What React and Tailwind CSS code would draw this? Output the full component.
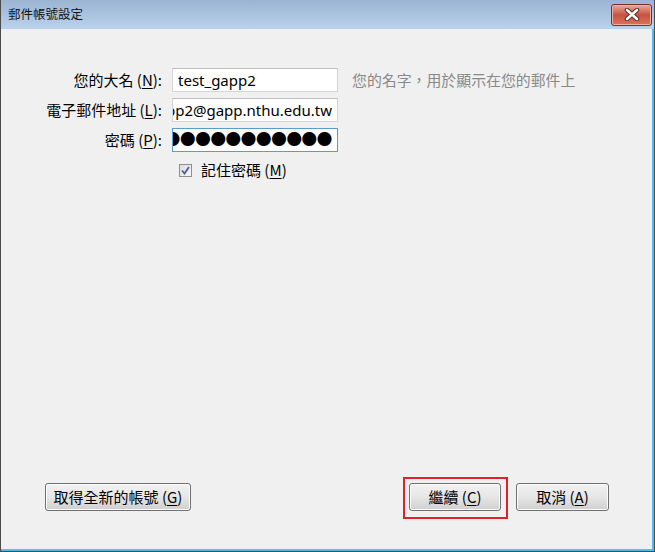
import { useState } from 'react'

const cjk = '"Noto Sans CJK TC", "Noto Sans", sans-serif'
const latin = '"Noto Sans", "Noto Sans CJK TC", sans-serif'

function Key({ k }) {
  return <span className="underline underline-offset-2">{k}</span>
}

function WinButton({ children, className = '' }) {
  return (
    <button
      className={
        'h-[28px] rounded-[3px] border border-[#707070] bg-gradient-to-b from-[#f2f2f2] via-[#e6e6e6] to-[#cfcfcf] text-[15px] text-black shadow-[inset_0_0_0_1px_#fcfcfc] ' +
        className
      }
      style={{ fontFamily: cjk }}
    >
      {children}
    </button>
  )
}

function Field({ children, focused, scrolled }) {
  return (
    <div
      className={
        'flex h-[24px] w-[166px] items-center overflow-hidden whitespace-nowrap bg-white px-[5px] text-[15px] text-black border ' +
        (scrolled ? 'justify-end ' : 'justify-start ') +
        (focused ? 'border-[#5a9bd0]' : 'border-[#d5d5d5] border-t-[#bfbfbf]')
      }
      style={{ fontFamily: latin }}
    >
      {children}
    </div>
  )
}

function App() {
  const [remember, setRemember] = useState(true)

  return (
    <div className="flex h-[552px] w-[655px] flex-col border-l border-r border-b border-[#4a4a4a] bg-[#f0f0f0]">
      <div className="flex h-[29px] shrink-0 items-center justify-between bg-gradient-to-b from-[#9bb4d3] to-[#bad2eb] pl-[7px] pr-[2px]">
        <span className="text-[12.5px] text-[#111]" style={{ fontFamily: cjk }}>
          郵件帳號設定
        </span>
        <div className="flex h-[22px] w-[41px] items-center justify-center rounded-[3px] border border-[#7a2f27] bg-gradient-to-b from-[#e6a99c] via-[#c8513f] to-[#d9735f] shadow-[inset_0_0_0_1px_#eab0a4]">
          <svg width="16" height="13" viewBox="0 0 16 13">
            <path
              d="M3 2 L13 11 M13 2 L3 11"
              stroke="#5a2a26"
              strokeWidth="4.5"
              strokeLinecap="round"
            />
            <path
              d="M3 2 L13 11 M13 2 L3 11"
              stroke="#ffffff"
              strokeWidth="2.6"
              strokeLinecap="round"
            />
          </svg>
        </div>
      </div>

      <div className="flex flex-1 flex-col border-r-2 border-b-2 border-[#4cc1ea]">
        <div className="grid grid-cols-[161px_166px_auto] items-center gap-x-[10px] gap-y-[6px] pt-[39px] text-[15px] text-black" style={{ fontFamily: cjk }}>
          <span className="text-right">
            您的大名 (<Key k="N" />):
          </span>
          <Field>test_gapp2</Field>
          <span className="pl-[4px] text-[14.9px] text-[#888888]">您的名字，用於顯示在您的郵件上</span>

          <span className="text-right">
            電子郵件地址 (<Key k="L" />):
          </span>
          <Field scrolled>test_gapp2@gapp.nthu.edu.tw</Field>
          <span />

          <span className="text-right">
            密碼 (<Key k="P" />):
          </span>
          <Field focused scrolled>
            <span className="text-[15.5px] tracking-[-0.3px]">●●●●●●●●●●●●●●</span>
          </Field>
          <span />

          <span />
          <label className="mt-[1px] flex cursor-pointer items-center gap-[9px] pl-[7px]" onClick={() => setRemember(!remember)}>
            <span className="flex h-[13px] w-[13px] items-center justify-center border border-[#8f8f8f] bg-gradient-to-br from-[#dcdcdc] to-[#f7f7f7]">
              {remember && (
                <svg width="9" height="9" viewBox="0 0 9 9">
                  <path d="M1 4.5 L3.5 7.5 L8 1" fill="none" stroke="#4b5f96" strokeWidth="1.8" />
                </svg>
              )}
            </span>
            <span>
              記住密碼 (<Key k="M" />)
            </span>
          </label>
        </div>

        <div className="mt-auto flex items-center pb-[38px] pl-[44px]">
          <WinButton className="w-[146px]">
            取得全新的帳號 (<Key k="G" />)
          </WinButton>
          <div className="relative ml-auto">
            <WinButton className="w-[92px]">
              繼續 (<Key k="C" />)
            </WinButton>
            <div className="pointer-events-none absolute -left-[6px] -right-[7px] -top-[6px] -bottom-[8px] border-2 border-[#e41e2b]" />
          </div>
          <WinButton className="ml-[15px] mr-[43px] w-[93px]">
            取消 (<Key k="A" />)
          </WinButton>
        </div>
      </div>
    </div>
  )
}

export default App
